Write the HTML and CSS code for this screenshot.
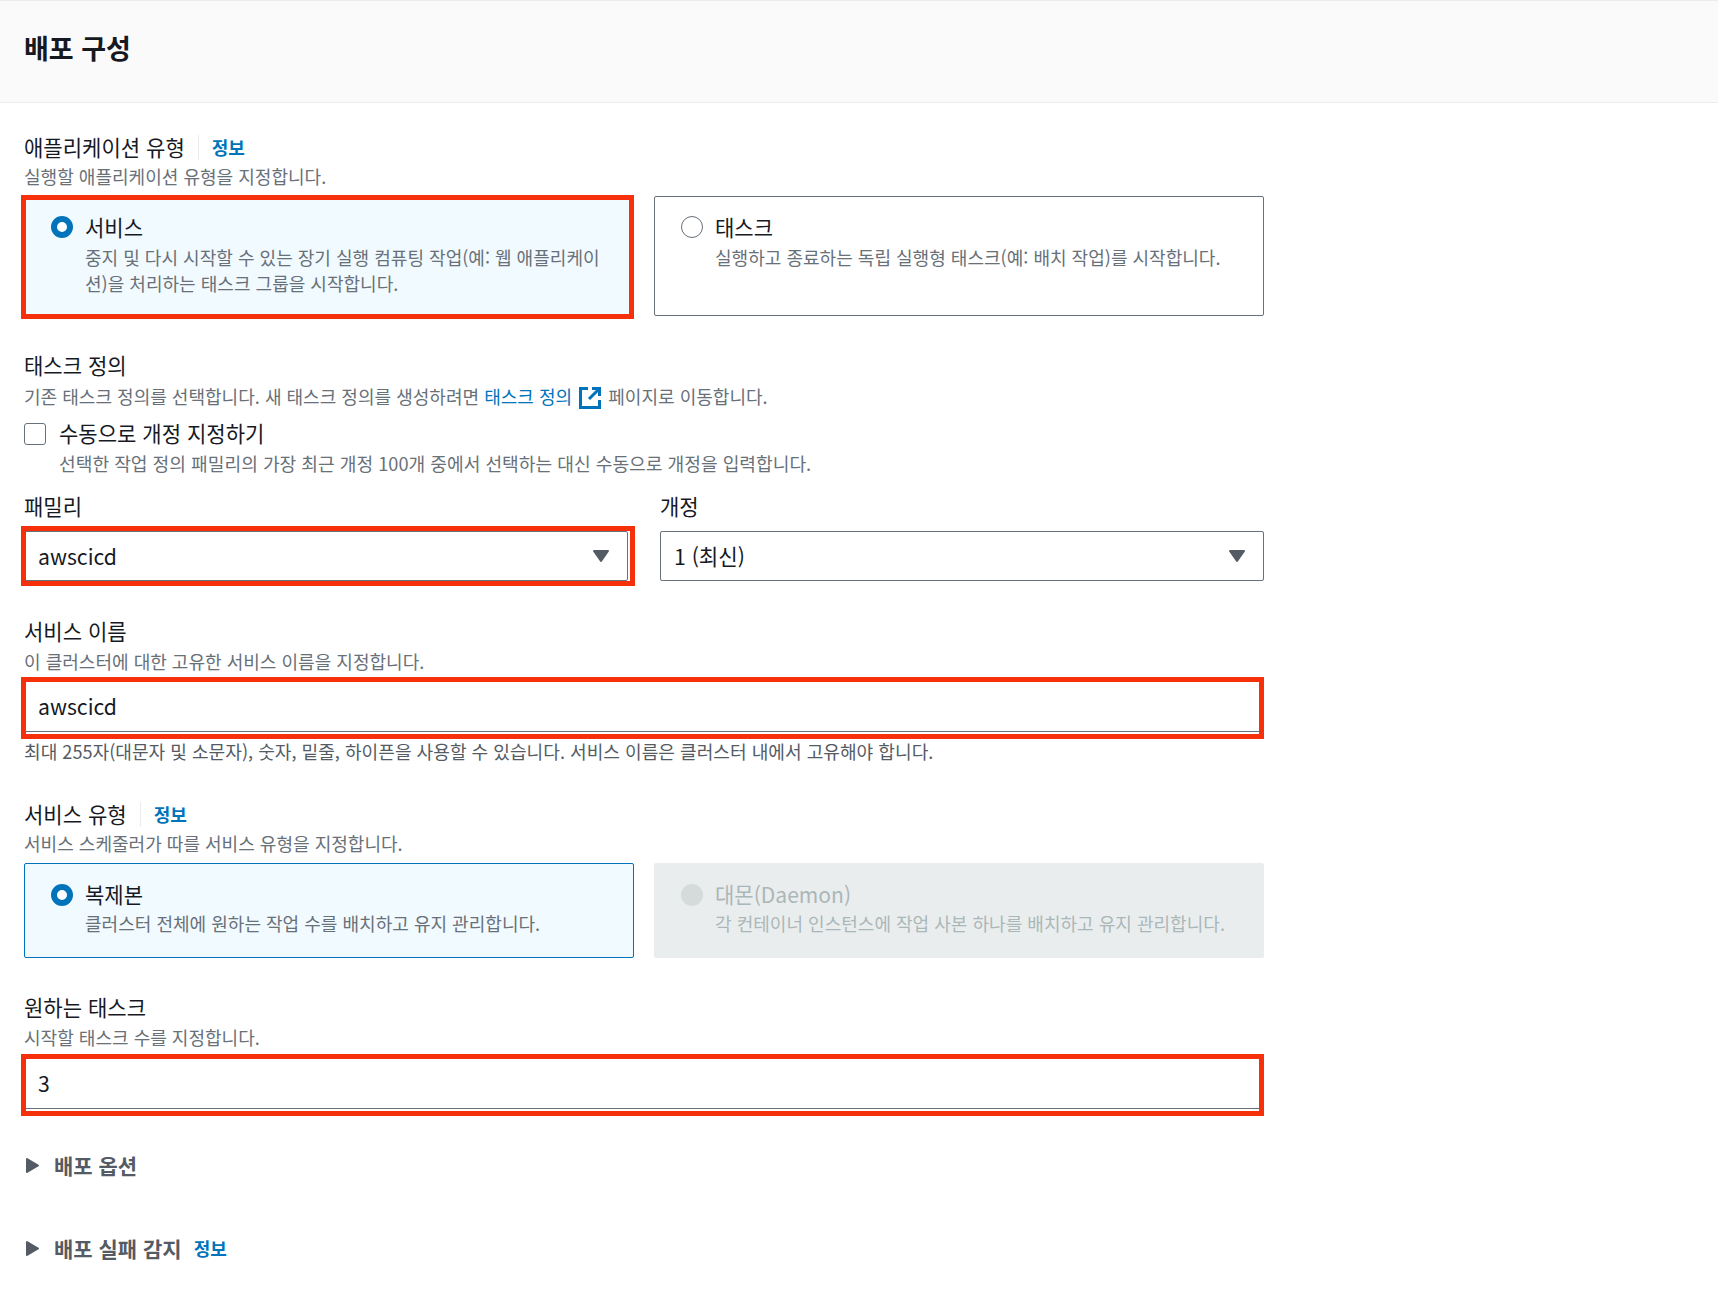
FILE: index.html
```html
<!DOCTYPE html>
<html lang="ko">
<head>
<meta charset="utf-8">
<title>배포 구성</title>
<link rel="stylesheet" href="styles.css">
</head>
<body>
<header class="head"><h1 class="title">배포 구성</h1></header>
<main class="form">

  <div class="label-row"><span class="label">애플리케이션 유형</span><span class="divider"></span><a class="info">정보</a></div>
  <p class="desc desc-near">실행할 애플리케이션 유형을 지정합니다.</p>
  <div class="cards cards-app">
    <div class="marked">
      <div class="card selected tall">
        <span class="radio on"></span>
        <div><div class="card-title">서비스</div><div class="card-desc">중지 및 다시 시작할 수 있는 장기 실행 컴퓨팅 작업(예: 웹 애플리케이<br>션)을 처리하는 태스크 그룹을 시작합니다.</div></div>
      </div>
      <span class="mark mark-card"></span>
    </div>
    <div class="card tall">
      <span class="radio"></span>
      <div><div class="card-title">태스크</div><div class="card-desc">실행하고 종료하는 독립 실행형 태스크(예: 배치 작업)를 시작합니다.</div></div>
    </div>
  </div>

  <div class="label-row sec-task"><span class="label">태스크 정의</span></div>
  <p class="desc desc-far">기존 태스크 정의를 선택합니다. 새 태스크 정의를 생성하려면 <a class="link">태스크 정의</a> <svg class="ext" viewBox="0 0 24 24" width="24" height="24" aria-hidden="true"><path d="M10 2.5H2.5v19h19V14M14 2.5h7.5V10M21 3 11 13" fill="none" stroke="#0073bb" stroke-width="3"/></svg> 페이지로 이동합니다.</p>
  <div class="check-row">
    <span class="checkbox"></span>
    <div>
      <div class="label">수동으로 개정 지정하기</div>
      <div class="desc check-desc">선택한 작업 정의 패밀리의 가장 최근 개정 100개 중에서 선택하는 대신 수동으로 개정을 입력합니다.</div>
    </div>
  </div>

  <div class="selects">
    <div>
      <div class="label select-label">패밀리</div>
      <div class="marked">
        <div class="control select">awscicd<svg class="caret" viewBox="0 0 18 14" width="18" height="14" aria-hidden="true"><path d="M2 2h14L9 12z" fill="#545b64" stroke="#545b64" stroke-width="2" stroke-linejoin="round"/></svg></div>
        <span class="mark mark-select"></span>
      </div>
    </div>
    <div>
      <div class="label select-label">개정</div>
      <div class="control select">1 (최신)<svg class="caret" viewBox="0 0 18 14" width="18" height="14" aria-hidden="true"><path d="M2 2h14L9 12z" fill="#545b64" stroke="#545b64" stroke-width="2" stroke-linejoin="round"/></svg></div>
    </div>
  </div>

  <div class="label-row sec-name"><span class="label">서비스 이름</span></div>
  <p class="desc desc-mid">이 클러스터에 대한 고유한 서비스 이름을 지정합니다.</p>
  <div class="marked input-wrap">
    <div class="control input">awscicd</div>
    <span class="mark mark-input"></span>
  </div>
  <p class="desc hint">최대 255자(대문자 및 소문자), 숫자, 밑줄, 하이픈을 사용할 수 있습니다. 서비스 이름은 클러스터 내에서 고유해야 합니다.</p>

  <div class="label-row sec-type"><span class="label">서비스 유형</span><span class="divider"></span><a class="info">정보</a></div>
  <p class="desc desc-near">서비스 스케줄러가 따를 서비스 유형을 지정합니다.</p>
  <div class="cards cards-type">
    <div class="card selected short">
      <span class="radio on"></span>
      <div><div class="card-title">복제본</div><div class="card-desc">클러스터 전체에 원하는 작업 수를 배치하고 유지 관리합니다.</div></div>
    </div>
    <div class="card disabled short">
      <span class="radio off"></span>
      <div><div class="card-title">대몬(Daemon)</div><div class="card-desc">각 컨테이너 인스턴스에 작업 사본 하나를 배치하고 유지 관리합니다.</div></div>
    </div>
  </div>

  <div class="label-row sec-count"><span class="label">원하는 태스크</span></div>
  <p class="desc desc-mid">시작할 태스크 수를 지정합니다.</p>
  <div class="marked input-wrap input-wrap-count">
    <div class="control input">3</div>
    <span class="mark mark-input"></span>
  </div>

  <div class="expand expand-first"><svg class="tri" viewBox="0 0 15 17" width="15" height="17" aria-hidden="true"><path d="M2 2l11 6.5L2 15z" fill="#545b64" stroke="#545b64" stroke-width="2" stroke-linejoin="round"/></svg><span class="expand-title">배포 옵션</span></div>
  <div class="expand expand-second"><svg class="tri" viewBox="0 0 15 17" width="15" height="17" aria-hidden="true"><path d="M2 2l11 6.5L2 15z" fill="#545b64" stroke="#545b64" stroke-width="2" stroke-linejoin="round"/></svg><span class="expand-title">배포 실패 감지</span><a class="info info-plain">정보</a></div>
</main>
</body>
</html>
```
FILE: styles.css
```css
* { box-sizing: border-box; }
html, body { margin: 0; padding: 0; background: #fff; }
body {
  width: 1718px;
  height: 1304px;
  overflow: hidden;
  font-family: "Noto Sans CJK KR", "Noto Sans", sans-serif;
  color: #16191f;
}
.head {
  height: 103px;
  background: #fafafa;
  border-top: 1px solid #eaeded;
  border-bottom: 1px solid #eaeded;
  padding: 32px 0 0 24px;
}
.title { margin: 0; font-size: 27px; line-height: 30px; font-weight: 700; }
.form { width: 1264px; padding: 29px 0 0 24px; }
.label-row { display: flex; align-items: center; height: 30px; }
.label { font-size: 21.05px; line-height: 30px; font-weight: 400; }
.divider { width: 1px; height: 25px; background: #eaeded; margin: 0 13px; }
.info { font-size: 18px; line-height: 30px; font-weight: 700; color: #0073bb; }
.info-plain { margin-left: 12px; }
.desc { margin: 0; font-size: 18.05px; line-height: 28px; color: #687078; }
.desc-near { margin-top: 0; }
.desc-mid { margin-top: 1px; }
.desc-far { margin-top: 2px; }
.link { color: #0073bb; }
.ext { vertical-align: -6px; margin: 0 1px; }

.cards { display: grid; grid-template-columns: 610px 610px; column-gap: 20px; }
.cards-app { margin-top: 6px; }
.cards-type { margin-top: 6px; }
.card {
  display: flex;
  gap: 12px;
  padding: 16px 20px 0 26px;
  border: 1px solid #687078;
  border-radius: 2px;
}
.tall { height: 120px; }
.short { height: 95px; }
.selected { background: #f1faff; border-color: #0073bb; }
.disabled { background: #eaeded; border-color: #eaeded; }
.radio {
  flex: none;
  width: 22px;
  height: 22px;
  margin-top: 3px;
  border: 1.8px solid #687078;
  border-radius: 50%;
  background: #fff;
}
.short .radio { margin-top: 4px; }
.radio.on { border: 6px solid #0073bb; }
.radio.off { border: 0; background: #d5dbdb; }
.card-title { font-size: 21.05px; line-height: 28px; }
.card-desc { margin-top: 3px; font-size: 18.05px; line-height: 26px; color: #687078; white-space: nowrap; }
.short .card-desc { margin-top: 2px; }
.disabled .card-title, .disabled .card-desc { color: #aab7b8; }

.marked { position: relative; }
.mark { position: absolute; border: 5px solid #f5300b; pointer-events: none; }
.mark-card { left: -3px; right: 0; top: -1px; bottom: -3px; }
.mark-select { left: -3px; right: -7px; top: -5px; bottom: -5px; }
.mark-input { left: -3px; right: 0; top: -3px; bottom: -7px; }

.sec-task { margin-top: 34px; }
.check-row { display: flex; gap: 13px; margin-top: 8px; }
.checkbox {
  flex: none;
  width: 22px;
  height: 22px;
  margin-top: 5px;
  border: 1px solid #687078;
  border-radius: 3px;
  background: #fff;
}
.check-desc { margin-top: 1px; font-size: 18.15px; }
.selects { display: grid; grid-template-columns: 604px 604px; column-gap: 32px; margin-top: 14px; }
.select-label { margin-bottom: 10px; }
.control { font-size: 21.2px; line-height: 50px; color: #16191f; }
.select {
  position: relative;
  height: 50px;
  padding-left: 13px;
  border: 1px solid #687078;
  border-radius: 2px;
  background: #fff;
  line-height: 48px;
}
.caret { position: absolute; right: 17px; top: 17px; }
.sec-name { margin-top: 35px; }
.input-wrap { margin-top: 5px; }
.input {
  height: 52px;
  padding-left: 13px;
  border: 1px solid #687078;
  background: #fff;
  line-height: 50px;
}
.hint { margin-top: 5px; color: #545b64; font-size: 18.1px; }
.sec-type { margin-top: 34px; }
.sec-count { margin-top: 34px; }
.input-wrap-count { margin-top: 6px; }
.expand { display: flex; align-items: center; height: 30px; }
.expand-first { margin-top: 41px; }
.expand-second { margin-top: 53px; }
.tri { flex: none; margin-left: 1px; }
.expand-title { margin-left: 14px; font-size: 21px; font-weight: 700; color: #545b64; }
```
